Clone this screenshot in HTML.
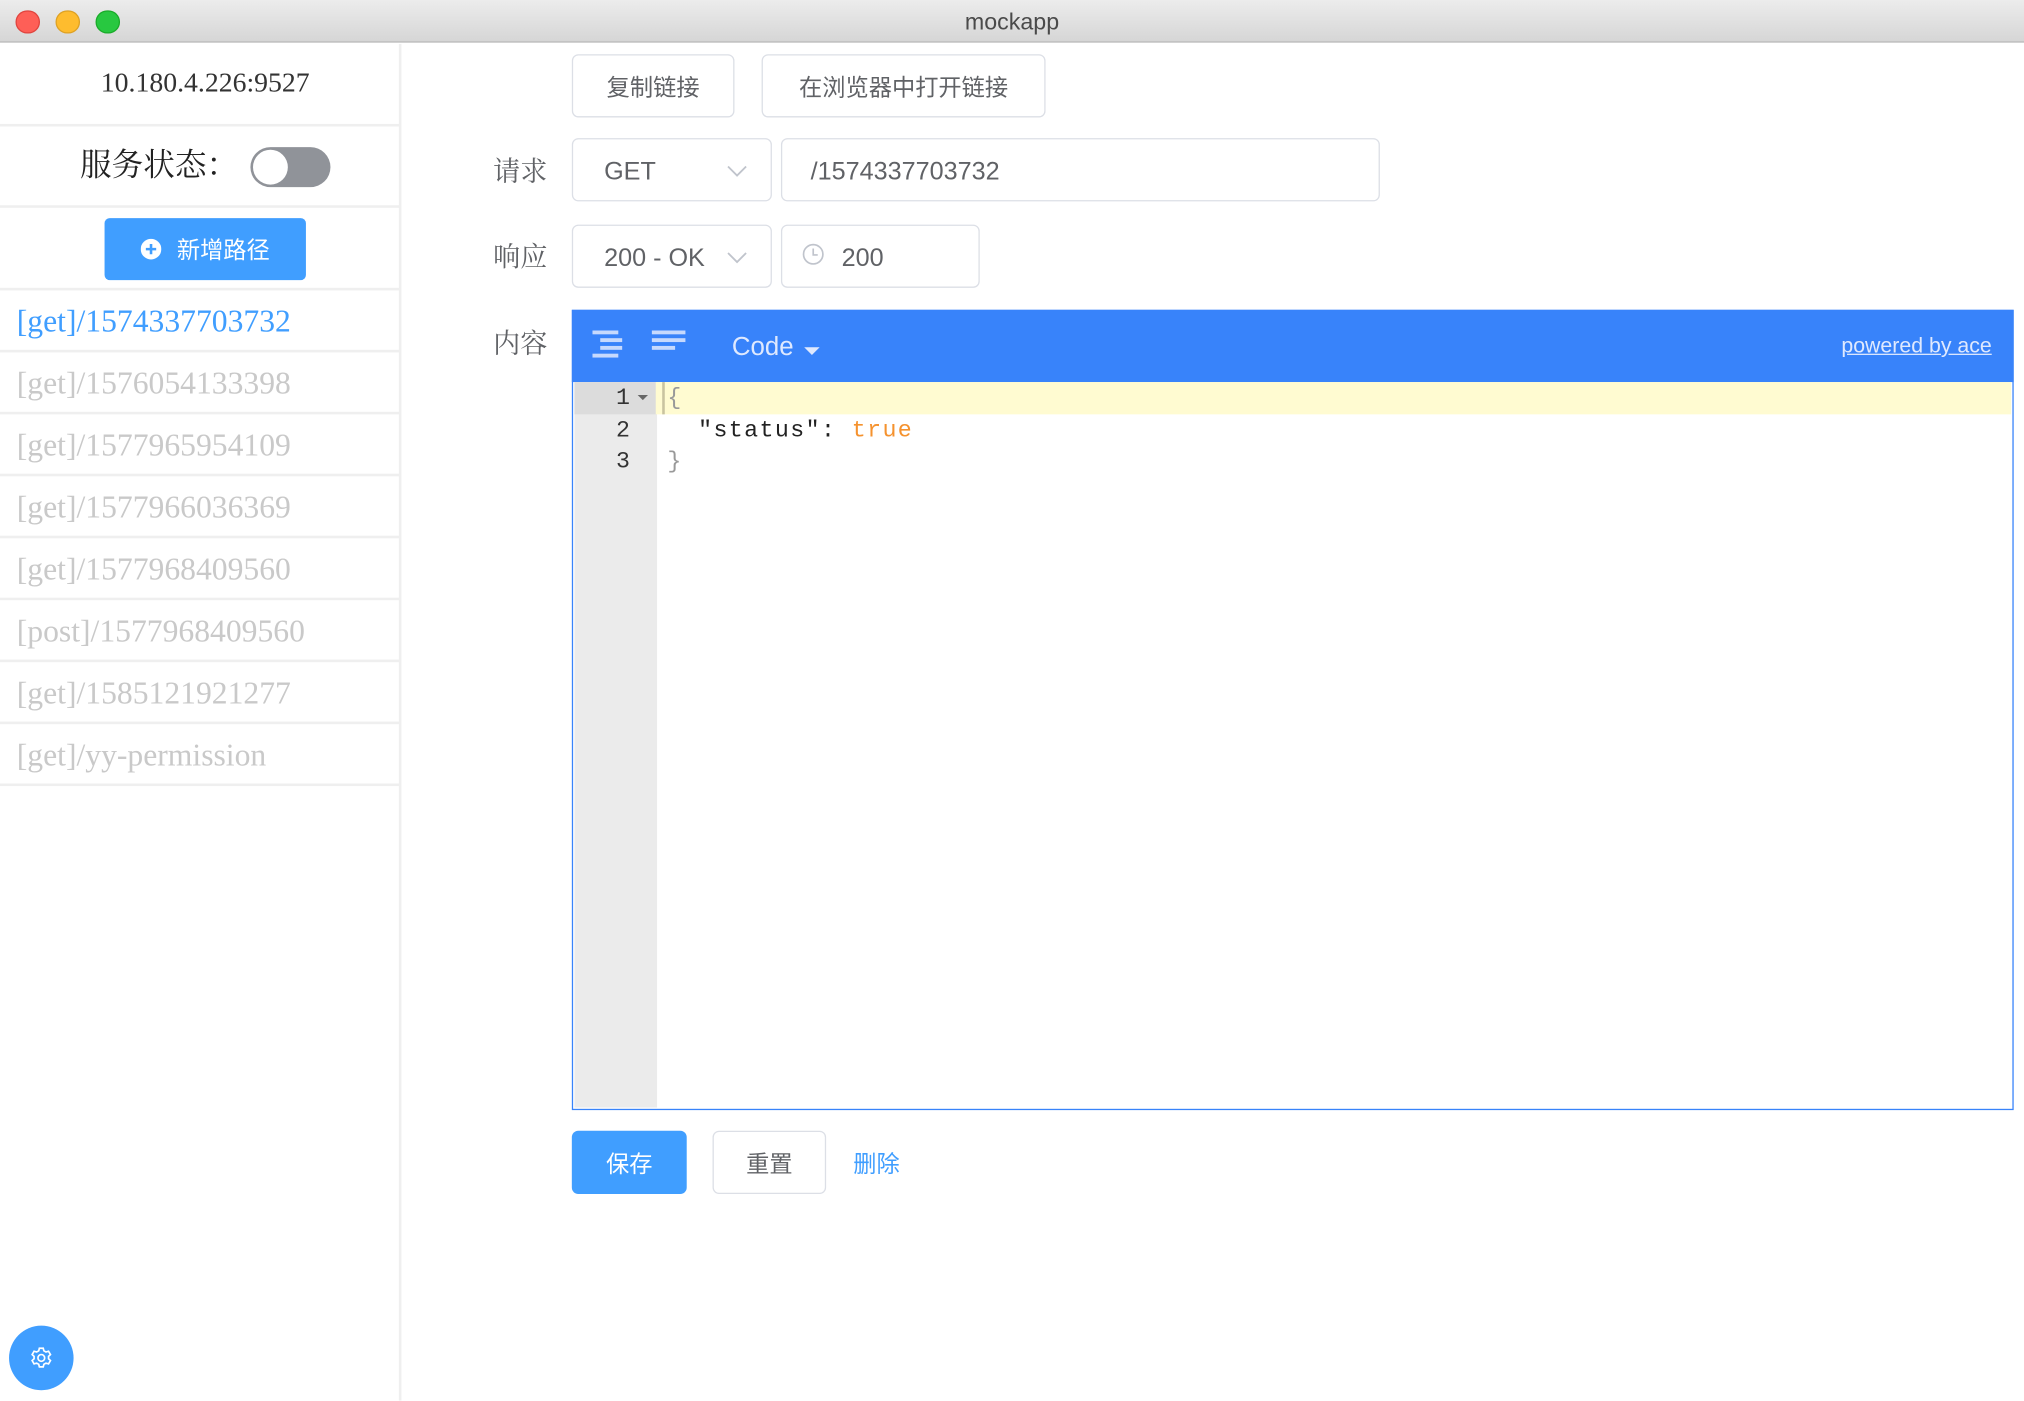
<!DOCTYPE html>
<html><head><meta charset="utf-8"><style>
*{box-sizing:border-box;margin:0;padding:0}
html,body{width:2024px;height:1400px;overflow:hidden;background:#fff}
#w{position:absolute;left:0;top:0;width:1568px;height:1085px;transform:scale(1.29082);transform-origin:0 0;font-family:"Liberation Sans","Noto Sans CJK SC",sans-serif}
.abs{position:absolute}
.tb{left:0;top:0;width:1568px;height:33px;background:linear-gradient(#ececec,#d6d6d6);border-bottom:1px solid #b4b4b4}
.dot{width:18.6px;height:18.6px;border-radius:50%;top:7.7px}
.title{left:0;width:1568px;top:7px;text-align:center;font-size:18px;color:#4a4a4a}
.side{left:0;top:34px;width:311px;height:1051px;border-right:2px solid #efefef}
.hr{left:0;width:310px;height:2px;background:#efefef}
.serif{font-family:"Liberation Serif","Noto Serif CJK SC",serif}
.li{left:13px;font-size:24.5px;color:#c9c9c9;line-height:30px}
.btn{border:1.5px solid #dcdfe6;border-radius:5px;background:#fff;color:#606266;font-size:18px;display:flex;align-items:center;justify-content:center}
.lbl{left:382px;font-size:21px;color:#606266;font-family:"Noto Serif CJK SC",serif;line-height:28px}
.inp{border:1.5px solid #dcdfe6;border-radius:5px;background:#fff;color:#606266;font-size:19.5px;line-height:51px}
.code{font-family:"Liberation Mono",monospace;font-size:18px;line-height:24.5px}
</style></head><body><div id="w">
<div class="abs tb"></div>
<div class="abs dot" style="left:12.4px;background:#fe5f57;border:1px solid #e0443e"></div>
<div class="abs dot" style="left:43.4px;background:#febc2e;border:1px solid #dea123"></div>
<div class="abs dot" style="left:74.4px;background:#28c840;border:1px solid #1aab29"></div>
<div class="abs title">mockapp</div>

<div class="abs side"></div>
<div class="abs serif" style="left:4px;width:310px;top:52px;text-align:center;font-size:21.5px;color:#333">10.180.4.226:9527</div>
<div class="abs hr" style="top:96px"></div>
<div class="abs serif" style="left:62px;top:113px;font-size:24.5px;color:#222;line-height:32px">服务状态：</div>
<div class="abs" style="left:194px;top:114px;width:62px;height:31px;border-radius:16px;background:#909399"></div>
<div class="abs" style="left:196px;top:116px;width:27px;height:27px;border-radius:50%;background:#fff"></div>
<div class="abs hr" style="top:159px"></div>
<div class="abs" style="left:81px;top:169px;width:156px;height:48px;background:#409eff;border-radius:4px;color:#fff;font-size:18px;display:flex;align-items:center;justify-content:center;gap:12px">
<svg width="16" height="16" viewBox="0 0 16 16"><circle cx="8" cy="8" r="8" fill="#fff"/><path d="M8 4v8M4 8h8" stroke="#409eff" stroke-width="2"/></svg><span>新增路径</span></div>
<div class="abs hr" style="top:223px"></div>
<div class="abs li serif" style="top:235px;color:#409eff">[get]/1574337703732</div>
<div class="abs hr" style="top:271px"></div>
<div class="abs li serif" style="top:283px">[get]/1576054133398</div>
<div class="abs hr" style="top:319px"></div>
<div class="abs li serif" style="top:331px">[get]/1577965954109</div>
<div class="abs hr" style="top:367px"></div>
<div class="abs li serif" style="top:379px">[get]/1577966036369</div>
<div class="abs hr" style="top:415px"></div>
<div class="abs li serif" style="top:427px">[get]/1577968409560</div>
<div class="abs hr" style="top:463px"></div>
<div class="abs li serif" style="top:475px">[post]/1577968409560</div>
<div class="abs hr" style="top:511px"></div>
<div class="abs li serif" style="top:523px">[get]/1585121921277</div>
<div class="abs hr" style="top:559px"></div>
<div class="abs li serif" style="top:571px">[get]/yy-permission</div>
<div class="abs hr" style="top:607px"></div>

<div class="abs" style="left:7px;top:1027px;width:50px;height:50px;border-radius:50%;background:#409eff"></div>
<svg class="abs" style="left:22px;top:1042px" width="20" height="20" viewBox="0 0 20 20"><path d="M8.5 2.5h3l.5 2 1.6.9 2-.6 1.5 2.6-1.5 1.4v1.8l1.5 1.4-1.5 2.6-2-.6-1.6.9-.5 2h-3l-.5-2-1.6-.9-2 .6-1.5-2.6 1.5-1.4V8.8L2.9 7.4l1.5-2.6 2 .6L8 4.5z" fill="none" stroke="#fff" stroke-width="1.3"/><circle cx="10" cy="10" r="2.6" fill="none" stroke="#fff" stroke-width="1.3"/></svg>

<div class="abs btn" style="left:443px;top:42px;width:126px;height:49px">复制链接</div>
<div class="abs btn" style="left:590px;top:42px;width:220px;height:49px">在浏览器中打开链接</div>

<div class="abs lbl" style="top:118px">请求</div>
<div class="abs inp" style="left:443px;top:107px;width:155px;height:49px;padding-left:24px">GET</div>
<svg class="abs" style="left:562px;top:126px" width="18" height="12" viewBox="0 0 18 12"><path d="M2 3l7 7 7-7" fill="none" stroke="#c0c4cc" stroke-width="1.4"/></svg>
<div class="abs inp" style="left:605px;top:107px;width:464px;height:49px;padding-left:22px">/1574337703732</div>

<div class="abs lbl" style="top:184px">响应</div>
<div class="abs inp" style="left:443px;top:174px;width:155px;height:49px;padding-left:24px">200 - OK</div>
<svg class="abs" style="left:562px;top:193px" width="18" height="12" viewBox="0 0 18 12"><path d="M2 3l7 7 7-7" fill="none" stroke="#c0c4cc" stroke-width="1.4"/></svg>
<div class="abs inp" style="left:605px;top:174px;width:154px;height:49px;padding-left:46px">200</div>
<svg class="abs" style="left:621px;top:188px" width="18" height="18" viewBox="0 0 18 18"><circle cx="9" cy="9" r="7.5" fill="none" stroke="#c0c4cc" stroke-width="1.3"/><path d="M9 4.5V9.5h3.5" fill="none" stroke="#c0c4cc" stroke-width="1.3"/></svg>

<div class="abs lbl" style="top:251px">内容</div>
<div class="abs" style="left:443px;top:240px;width:1117px;height:620px;border:1.5px solid #3883fa;background:#fff"></div>
<div class="abs" style="left:443px;top:240px;width:1117px;height:56px;background:#3883fa"></div>
<svg class="abs" style="left:456px;top:256px" width="80" height="26" viewBox="0 0 80 26"><g fill="#c6d9fd"><rect x="3" y="0" width="20" height="3"/><rect x="9" y="6" width="17" height="3"/><rect x="9" y="12" width="17" height="3"/><rect x="3" y="18" width="20" height="3"/><rect x="49" y="0" width="26" height="3"/><rect x="49" y="6" width="26" height="3"/><rect x="49" y="12" width="18" height="3"/></g></svg>
<div class="abs" style="left:567px;top:258px;font-size:20px;color:#dfe9fe">Code</div>
<svg class="abs" style="left:622px;top:268px" width="14" height="8" viewBox="0 0 14 8"><path d="M1 1h12L7 7z" fill="#dfe9fe"/></svg>
<div class="abs" style="left:1370px;top:259px;width:173px;text-align:right;font-size:16.5px;color:#dfe9fe;text-decoration:underline">powered by ace</div>

<div class="abs" style="left:444.5px;top:296px;width:64px;height:562px;background:#ebebeb"></div>
<div class="abs" style="left:444.5px;top:296px;width:64px;height:24.5px;background:#dcdcdc"></div>
<div class="abs" style="left:508px;top:296px;width:1050px;height:24.5px;background:#fffbd1"></div>
<div class="abs" style="left:513px;top:296px;width:2px;height:24.5px;background:#c9c3a0"></div>
<div class="abs code" style="left:460px;top:297px;width:28px;text-align:right;color:#333">1<br>2<br>3</div>
<svg class="abs" style="left:493px;top:305px" width="10" height="6" viewBox="0 0 10 6"><path d="M1 1h8L5 5z" fill="#666"/></svg>
<div class="abs code" style="left:517px;top:297px;color:#222;white-space:pre;letter-spacing:1.1px"><span style="color:#999">{</span>
  "status": <span style="color:#f5922e">true</span>
<span style="color:#999">}</span></div>

<div class="abs" style="left:443px;top:876px;width:89px;height:49px;background:#409eff;border-radius:5px;color:#fff;font-size:18px;display:flex;align-items:center;justify-content:center">保存</div>
<div class="abs btn" style="left:552px;top:876px;width:88px;height:49px">重置</div>
<div class="abs" style="left:661px;top:888px;font-size:18px;color:#409eff">删除</div>
</div></body></html>
